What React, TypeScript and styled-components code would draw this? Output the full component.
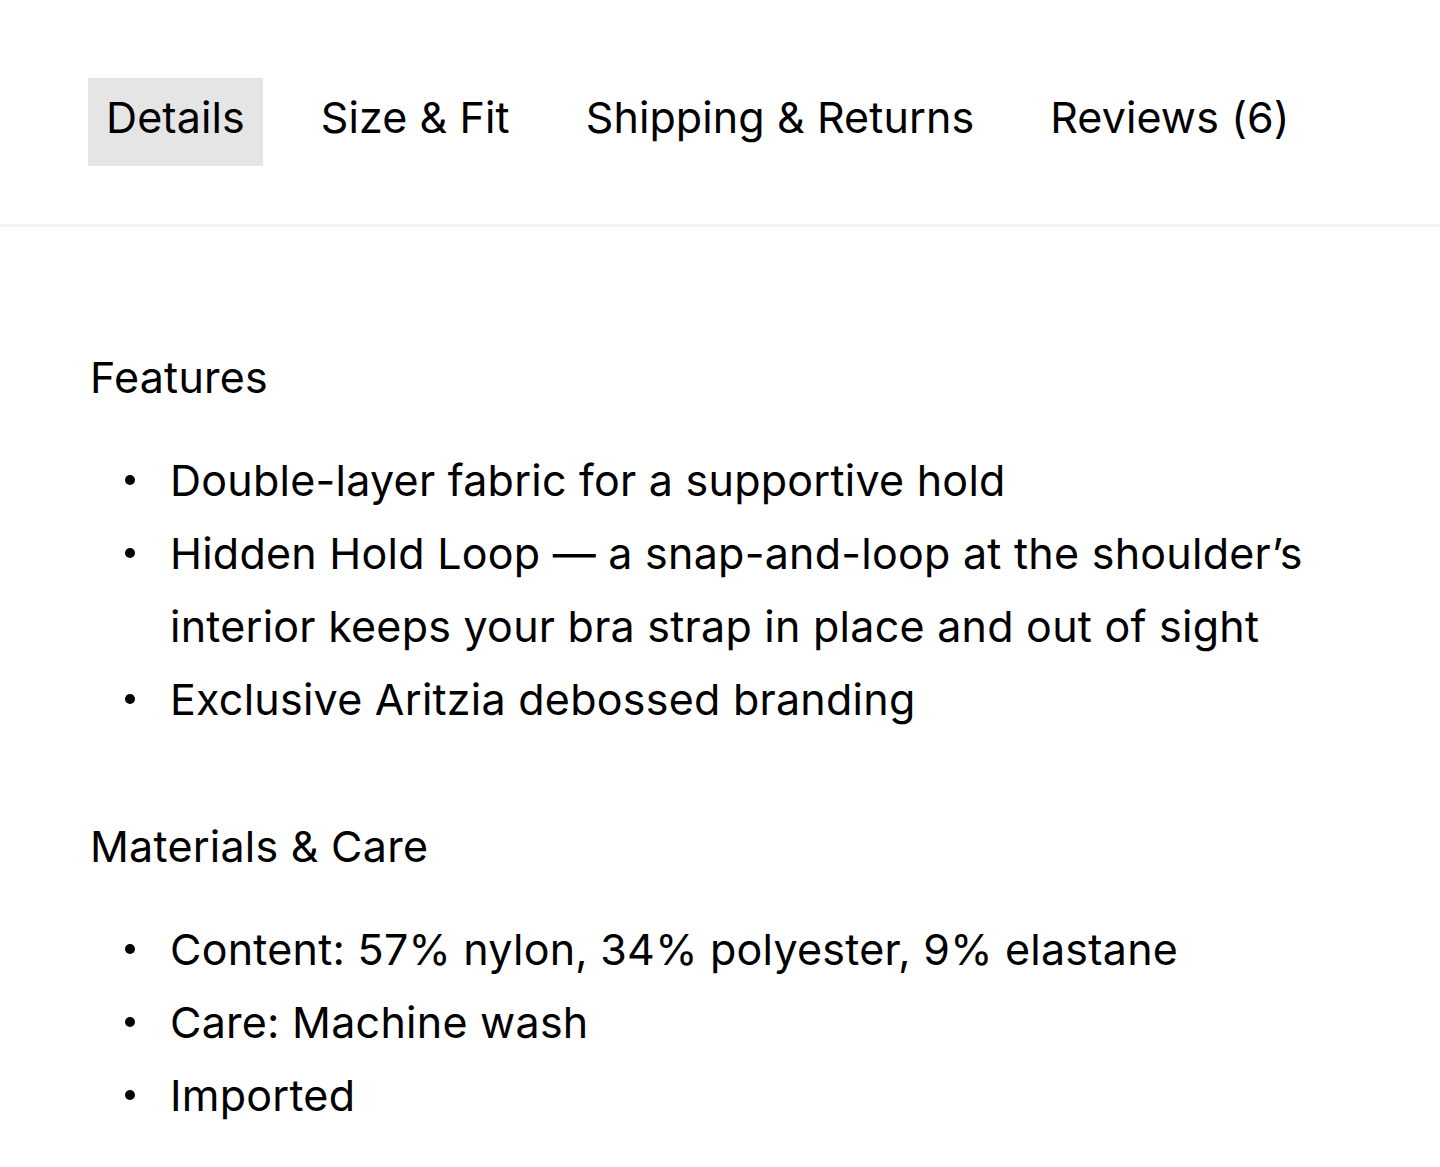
import React, { useState } from 'react';
import styled, { createGlobalStyle } from 'styled-components';

const GlobalStyle = createGlobalStyle`
  body {
    margin: 0;
    background: #ffffff;
    color: #000000;
    font-family: Inter, "Noto Sans", sans-serif;
  }
`;

const TabBar = styled.nav`
  display: flex;
  gap: 40px;
  padding: 78px 88px 58px;
  border-bottom: 3px solid #f3f3f3;
`;

const Tab = styled.button<{ $active?: boolean }>`
  display: flex;
  align-items: center;
  height: 88px;
  padding: 0 18px 10px;
  border: none;
  background: ${p => (p.$active ? '#e5e5e5' : 'transparent')};
  color: #000;
  font-family: inherit;
  font-size: 43px;
  letter-spacing: 0.1px;
  cursor: pointer;
`;

const Content = styled.div`
  padding: 114px 90px 20px;
  font-size: 43px;
  letter-spacing: 0.25px;
  line-height: 73px;
`;

const Section = styled.section`
  & + & {
    margin-top: 74px;
  }
`;

const Heading = styled.h3`
  margin: 0 0 30px;
  font-size: inherit;
  font-weight: 400;
`;

const List = styled.ul`
  margin: 0;
  padding: 0;
  list-style: none;
  max-width: 1260px;
`;

const Item = styled.li`
  display: grid;
  grid-template-columns: 80px 1fr;

  &::before {
    content: '';
    width: 10px;
    height: 10px;
    margin-top: 31px;
    border-radius: 50%;
    background: #000;
    justify-self: center;
  }
`;

const tabs = ['Details', 'Size & Fit', 'Shipping & Returns', 'Reviews (6)'];

const sections = [
  {
    title: 'Features',
    items: [
      'Double-layer fabric for a supportive hold',
      'Hidden Hold Loop \u2014 a snap-and-loop at the shoulder\u2019s interior keeps your bra strap in place and out of sight',
      'Exclusive Aritzia debossed branding',
    ],
  },
  {
    title: 'Materials & Care',
    items: ['Content: 57% nylon, 34% polyester, 9% elastane', 'Care: Machine wash', 'Imported'],
  },
];

const App: React.FC = () => {
  const [active, setActive] = useState(0);

  return (
    <>
      <GlobalStyle />
      <TabBar>
        {tabs.map((t, i) => (
          <Tab key={t} $active={i === active} onClick={() => setActive(i)}>
            {t}
          </Tab>
        ))}
      </TabBar>
      <Content>
        {sections.map(s => (
          <Section key={s.title}>
            <Heading>{s.title}</Heading>
            <List>
              {s.items.map(it => (
                <Item key={it}>{it}</Item>
              ))}
            </List>
          </Section>
        ))}
      </Content>
    </>
  );
};

export default App;
